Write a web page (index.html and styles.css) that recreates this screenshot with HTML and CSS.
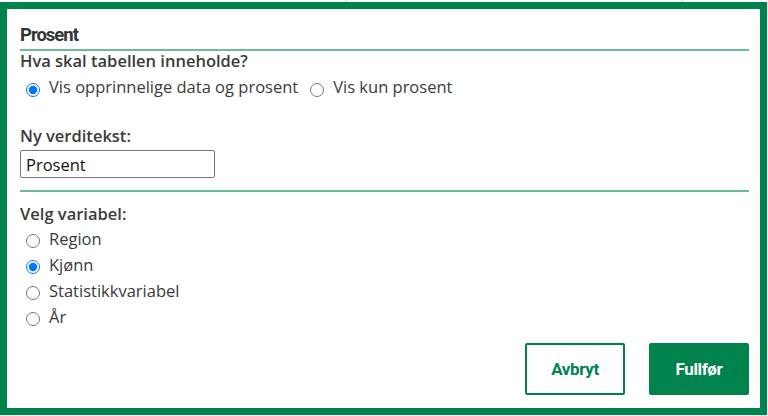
FILE: index.html
```html
<!DOCTYPE html>
<html lang="no">
<head>
  <meta charset="UTF-8" />
  <meta name="viewport" content="width=device-width, initial-scale=1.0" />
  <title>Prosent</title>
  <link rel="stylesheet" href="styles.css">
</head>
<body>
  <div class="backdrop">
    <span class="col col-a"></span>
    <span class="col col-b"></span>
  </div>

  <div class="dialog">
    <h2 class="dialog-title">Prosent</h2>

    <div class="section">
      <div class="label">Hva skal tabellen inneholde?</div>
      <div class="radio-inline">
        <label class="radio"><input type="radio" name="innhold" checked /> Vis opprinnelige data og prosent</label>
        <label class="radio"><input type="radio" name="innhold" /> Vis kun prosent</label>
      </div>
    </div>

    <div class="section section-text">
      <label class="label" for="verditekst">Ny verditekst:</label>
      <input type="text" id="verditekst" class="text-input" value="Prosent" />
    </div>

    <div class="section section-vars">
      <div class="label">Velg variabel:</div>
      <label class="radio row"><input type="radio" name="variabel" /> Region</label>
      <label class="radio row"><input type="radio" name="variabel" checked /> Kjønn</label>
      <label class="radio row"><input type="radio" name="variabel" /> Statistikkvariabel</label>
      <label class="radio row"><input type="radio" name="variabel" /> År</label>
    </div>

    <div class="actions">
      <button class="btn btn-secondary">Avbryt</button>
      <button class="btn btn-primary">Fullfør</button>
    </div>
  </div>
</body>
</html>
```

FILE: styles.css
```css
body {
  font-family: 'Open Sans', 'DejaVu Sans', sans-serif;
  font-size: 16.5px;
  line-height: 20px;
  color: #333;
  background-color: #fff;
  margin: 0;
  padding: 0;
}

.backdrop {
  height: 2px;
  display: flex;
}

.col {
  display: block;
  height: 2px;
  border-right: 1px solid #d5d5d5;
}

.col-a {
  width: 346px;
}

.col-b {
  width: 335px;
}

.dialog {
  box-sizing: border-box;
  width: 767px;
  height: 413px;
  border: 7px solid #00824d;
  padding: 14px 11px 0 13px;
  display: flex;
  flex-direction: column;
}

.dialog-title {
  font-family: 'Roboto', 'Liberation Sans', sans-serif;
  font-size: 18.5px;
  font-weight: 700;
  line-height: 24px;
  letter-spacing: -1px;
  color: #333;
  margin: 0;
  padding-bottom: 2px;
  border-bottom: 2px solid #6cbb98;
}

.label {
  display: block;
  font-weight: 600;
  color: #3b3b3b;
}

.radio-inline {
  display: flex;
  gap: 12px;
  margin-top: 4px;
  padding-left: 6px;
}

.radio {
  display: flex;
  align-items: center;
  line-height: 24px;
  color: #3b3b3b;
}

.radio input {
  width: 14px;
  height: 14px;
  margin: 5px 9px 0 0;
}

.section-text {
  padding-top: 27px;
  padding-bottom: 12px;
  border-bottom: 2px solid #6cbb98;
}

.text-input {
  box-sizing: border-box;
  display: block;
  width: 195px;
  height: 28px;
  margin-top: 4px;
  padding: 0 5px;
  font-family: 'Open Sans', 'DejaVu Sans', sans-serif;
  font-size: 16.5px;
  color: #111;
  border: 1px solid #767676;
  border-radius: 2px;
}

.section-vars {
  padding-top: 12px;
}

.section-vars .label {
  margin-bottom: 2px;
}

.row {
  line-height: 26px;
  padding-left: 6px;
}

.row input {
  margin-top: 4px;
}

.actions {
  display: flex;
  justify-content: flex-end;
  gap: 24px;
  margin-top: 13px;
}

.btn {
  box-sizing: border-box;
  width: 100px;
  height: 52px;
  font-family: 'Roboto', 'Liberation Sans', sans-serif;
  font-size: 17px;
  font-weight: 700;
  letter-spacing: -0.4px;
  border: 2px solid #00824d;
  border-radius: 2px;
  cursor: pointer;
}

.btn-secondary {
  background-color: #fff;
  color: #00824d;
}

.btn-primary {
  background-color: #00824d;
  color: #fff;
}
```
